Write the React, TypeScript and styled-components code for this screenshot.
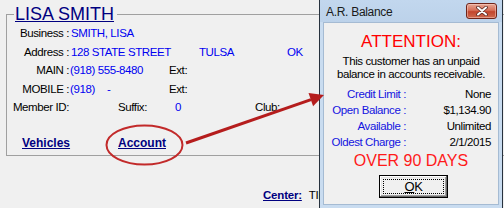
import React from "react";
import styled, { createGlobalStyle } from "styled-components";

const sans = `"Liberation Sans", Arial, sans-serif`;

const GlobalStyle = createGlobalStyle`
    html, body {
        margin: 0;
        padding: 0;
        background: #f0f0f0;
        overflow: hidden;
    }
    * {
        box-sizing: border-box;
    }
`;

const Screen = styled.div`
    position: relative;
    width: 504px;
    height: 208px;
    overflow: hidden;
    padding: 3px 0 0 6px;
    font-family: ${sans};
    font-size: 11.5px;
    letter-spacing: -0.4px;
    color: #000;
`;

const CustomerPanel = styled.fieldset`
    margin: 0;
    padding: 0;
    width: 620px;
    height: 153px;
    border: 1px solid #a0a0a0;
`;

const PanelTitle = styled.legend`
    margin-left: 7px;
    padding: 0 3px 0 1px;
    font-size: 18px;
    line-height: 22px;
    letter-spacing: 0;
    color: #000080;
    text-decoration: underline;
`;

const Rows = styled.div`
    margin-top: -1px;
`;

const FieldRow = styled.div`
    display: flex;
    align-items: center;
    height: 18.5px;
    white-space: nowrap;
`;

const Label = styled.span`
    flex: none;
    width: 62px;
    text-align: right;
`;

const Cell = styled.span<{ $w?: number; $blue?: boolean; $gap?: number }>`
    flex: none;
    width: ${(p) => (p.$w ? `${p.$w}px` : "auto")};
    margin-left: ${(p) => p.$gap ?? 0}px;
    color: ${(p) => (p.$blue ? "#0000f0" : "#000")};
`;

const LinkRow = styled.div`
    display: flex;
    align-items: center;
    height: 18px;
    margin-top: 17.5px;
    padding-left: 15px;
`;

const NavLink = styled.a<{ $w?: number }>`
    flex: none;
    width: ${(p) => (p.$w ? `${p.$w}px` : "auto")};
    font-weight: bold;
    font-size: 12px;
    letter-spacing: 0;
    color: #000080;
    text-decoration: none;
    span {
        text-decoration: underline;
    }
`;

const CenterRow = styled.div`
    display: flex;
    align-items: center;
    height: 16px;
    margin-top: 31px;
    padding-left: 257px;
    white-space: nowrap;
`;

const CenterLabel = styled.span`
    font-weight: bold;
    font-size: 11.5px;
    letter-spacing: -0.2px;
    color: #000080;
    text-decoration: underline;
`;

const CenterValue = styled.span`
    margin-left: 7px;
`;

/* dialog window */

const Dialog = styled.div`
    position: absolute;
    left: 319px;
    top: -1px;
    width: 184px;
    height: 210px;
    display: flex;
    flex-direction: column;
    background: #c9dcf0;
    border: 1px solid #27323e;
    z-index: 1;
`;

const TitleBar = styled.div`
    flex: none;
    height: 22px;
    display: flex;
    align-items: center;
    justify-content: space-between;
    padding: 0 5px 0 6px;
    background: linear-gradient(#c2d7ee, #bcd2ea);
`;

const TitleText = styled.span`
    font-size: 12px;
    letter-spacing: -0.3px;
    color: #1a1a1a;
    padding-top: 1px;
`;

const CloseButton = styled.div`
    width: 31px;
    height: 16px;
    border: 1px solid #6f2419;
    border-radius: 3px;
    background: linear-gradient(#e7a896 0%, #d66f58 45%, #c2452d 55%, #cf6a4e 100%);
    box-shadow: inset 0 0 0 1px rgba(255, 220, 210, 0.45);
    display: flex;
    align-items: center;
    justify-content: center;
`;

const Client = styled.div`
    flex: 1;
    margin: 0 3px 3px 3px;
    border: 1px solid #a5bbd3;
    background: #f0f0f0;
    display: flex;
    flex-direction: column;
    align-items: center;
    padding-top: 9px;
`;

const Attention = styled.div`
    font-size: 17px;
    line-height: 20px;
    letter-spacing: 0;
    color: #ff0000;
`;

const Message = styled.div`
    margin-top: 2.5px;
    line-height: 13px;
    text-align: center;
    white-space: nowrap;
`;

const InfoGrid = styled.div`
    align-self: stretch;
    margin-top: 5.5px;
    display: grid;
    grid-template-columns: 82px 85px;
    grid-auto-rows: 16px;
    align-items: center;
    white-space: nowrap;
`;

const InfoLabel = styled.span`
    justify-self: end;
    color: #1414e0;
`;

const InfoValue = styled.span`
    justify-self: end;
`;

const Overdue = styled.div`
    margin-top: 1.5px;
    font-size: 16px;
    line-height: 18px;
    letter-spacing: 0;
    color: #ff1a1a;
`;

const OkButton = styled.button`
    margin: 5.5px 0 0 5px;
    width: 69px;
    height: 23px;
    padding: 3px;
    display: flex;
    border: 1px solid #000;
    background: #f0f0f0;
    box-shadow: inset -1px -1px #696969, inset 1px 1px #ffffff, inset -2px -2px #a0a0a0, inset 2px 2px #e3e3e3;
    font-family: ${sans};
    font-size: 13px;
    letter-spacing: -0.3px;
    color: #000;
    cursor: pointer;
`;

const FocusRing = styled.span`
    flex: 1;
    display: flex;
    align-items: center;
    justify-content: center;
    border: 1px dotted #000;
`;

const Annotation = styled.svg`
    position: absolute;
    left: 0;
    top: 0;
    z-index: 2;
    pointer-events: none;
`;

const info = [
    ["Credit Limit :", "None"],
    ["Open Balance :", "$1,134.90"],
    ["Available :", "Unlimited"],
    ["Oldest Charge :", "2/1/2015"],
];

export default function App() {
    return (
        <>
            <GlobalStyle />
            <Screen>
                <CustomerPanel>
                    <PanelTitle>LISA SMITH</PanelTitle>
                    <Rows>
                        <FieldRow>
                            <Label>Business :</Label>
                            <Cell $blue $gap={2}>SMITH, LISA</Cell>
                        </FieldRow>
                        <FieldRow>
                            <Label>Address :</Label>
                            <Cell $blue $gap={2} $w={128}>128 STATE STREET</Cell>
                            <Cell $blue $w={88}>TULSA</Cell>
                            <Cell $blue>OK</Cell>
                        </FieldRow>
                        <FieldRow>
                            <Label>MAIN :</Label>
                            <Cell $blue $gap={1} $w={99}>(918) 555-8480</Cell>
                            <Cell>Ext:</Cell>
                        </FieldRow>
                        <FieldRow>
                            <Label>MOBILE :</Label>
                            <Cell $blue $gap={1} $w={37}>(918)</Cell>
                            <Cell $blue $w={62}>-</Cell>
                            <Cell>Ext:</Cell>
                        </FieldRow>
                        <FieldRow>
                            <Label>Member ID:</Label>
                            <Cell $w={49} />
                            <Cell $w={57}>Suffix:</Cell>
                            <Cell $blue $w={80}>0</Cell>
                            <Cell>Club:</Cell>
                        </FieldRow>
                    </Rows>
                    <LinkRow>
                        <NavLink $w={96}><span>Vehicles</span></NavLink>
                        <NavLink><span>Account</span></NavLink>
                    </LinkRow>
                </CustomerPanel>
                <CenterRow>
                    <CenterLabel>Center:</CenterLabel>
                    <CenterValue>TIRES</CenterValue>
                </CenterRow>

                <Dialog>
                    <TitleBar>
                        <TitleText>A.R. Balance</TitleText>
                        <CloseButton>
                            <svg width="12" height="10" viewBox="0 0 12 10">
                                <path d="M2 1.5 L10 8.5 M10 1.5 L2 8.5" stroke="#5a2a24" strokeWidth="3.6" strokeLinecap="round" />
                                <path d="M2 1.5 L10 8.5 M10 1.5 L2 8.5" stroke="#ffffff" strokeWidth="2" strokeLinecap="round" />
                            </svg>
                        </CloseButton>
                    </TitleBar>
                    <Client>
                        <Attention>ATTENTION:</Attention>
                        <Message>
                            This customer has an unpaid
                            <br />
                            balance in accounts receivable.
                        </Message>
                        <InfoGrid>
                            {info.map(([label, value]) => (
                                <React.Fragment key={label}>
                                    <InfoLabel>{label}</InfoLabel>
                                    <InfoValue>{value}</InfoValue>
                                </React.Fragment>
                            ))}
                        </InfoGrid>
                        <Overdue>OVER 90 DAYS</Overdue>
                        <OkButton>
                            <FocusRing>
                                <u>O</u>K
                            </FocusRing>
                        </OkButton>
                    </Client>
                </Dialog>

                <Annotation width="504" height="208" viewBox="0 0 504 208">
                    <ellipse cx="144.5" cy="145" rx="38" ry="19.5" fill="none" stroke="#c22a2a" strokeWidth="2" />
                    <line x1="186" y1="143" x2="311" y2="99.6" stroke="#b51d1d" strokeWidth="3" />
                    <polygon points="324,95 313.1,106.2 308.5,93" fill="#b51d1d" />
                </Annotation>
            </Screen>
        </>
    );
}
